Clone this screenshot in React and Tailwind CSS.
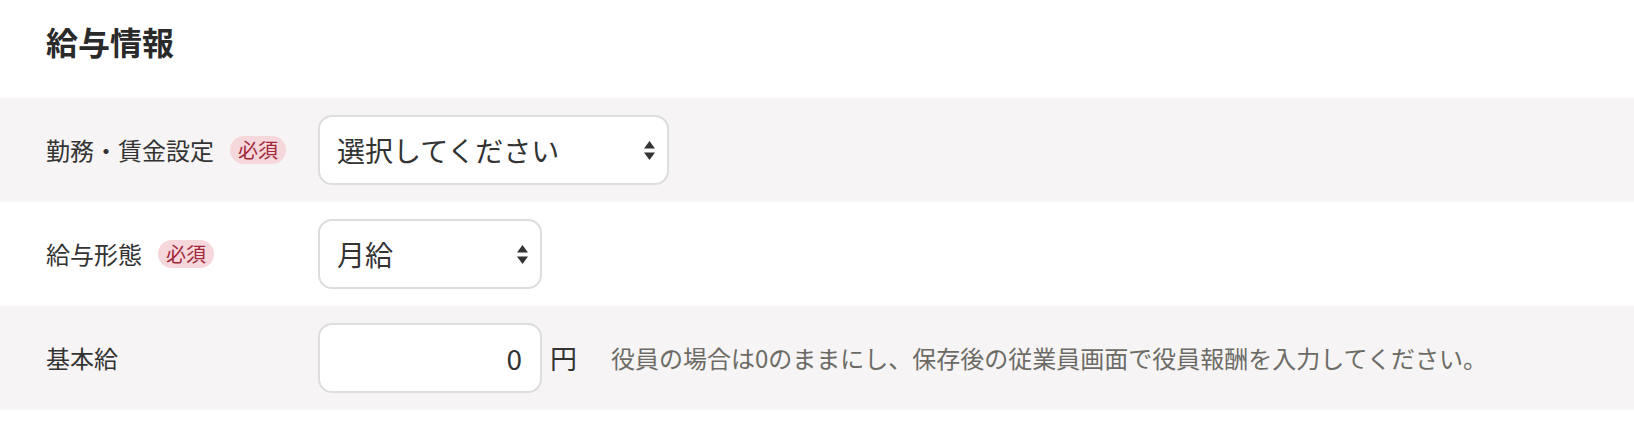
import React from 'react';

const font = { fontFamily: '"Noto Sans CJK JP", "Noto Sans", sans-serif' };

/**
 * Required badge shown next to a field label
 */
const RequiredBadge = () => (
  <span className="ml-4 inline-flex h-[28px] items-center rounded-full bg-[#f6d7db] px-[8px] text-[20px] leading-none text-[#a3283a]">
    必須
  </span>
);

/**
 * Up/down arrows drawn like a native select
 */
const SelectArrows = () => (
  <svg width="11" height="19" viewBox="0 0 11 19" className="shrink-0" aria-hidden="true">
    <path d="M5.5 0 L11 7.5 L0 7.5 Z" fill="#333" />
    <path d="M0 11.5 L11 11.5 L5.5 19 Z" fill="#333" />
  </svg>
);

const SelectBox = ({ width, options, value }) => (
  <div
    className={`flex h-[70px] items-center rounded-[14px] border-2 border-[#dedddd] bg-white pr-[12px] ${width}`}
  >
    <select
      defaultValue={value}
      className="h-full flex-1 appearance-none bg-transparent pl-[17px] text-[28px] text-[#333] outline-none"
      style={font}
    >
      {options.map(opt => (
        <option key={opt} value={opt}>{opt}</option>
      ))}
    </select>
    <SelectArrows />
  </div>
);

const FormRow = ({ label, required, shaded, children }) => (
  <div className={`flex h-[104px] items-center px-[46px] ${shaded ? 'bg-[#f6f4f4]' : 'bg-white'}`}>
    <div className="flex w-[272px] shrink-0 items-center">
      <span className="text-[24px] text-[#333]">{label}</span>
      {required && <RequiredBadge />}
    </div>
    {children}
  </div>
);

const App = () => {
  return (
    <div className="min-h-[422px] w-full bg-white" style={font}>
      {/* Section title */}
      <div className="h-[98px] px-[46px] pt-[17px]">
        <h2 className="text-[32px] font-bold leading-[48px] text-[#2a2a2a]">給与情報</h2>
      </div>

      <FormRow label="勤務・賃金設定" required shaded>
        <SelectBox width="w-[351px]" options={['選択してください']} value="選択してください" />
      </FormRow>

      <FormRow label="給与形態" required>
        <SelectBox width="w-[224px]" options={['月給', '日給', '時給']} value="月給" />
      </FormRow>

      <FormRow label="基本給" shaded>
        <input
          type="text"
          defaultValue="0"
          className="h-[70px] w-[224px] rounded-[14px] border-2 border-[#dedddd] bg-white pr-[18px] text-right text-[28px] text-[#333] outline-none"
          style={font}
        />
        <span className="ml-[8px] text-[27px] text-[#333]">円</span>
        <span className="ml-[34px] text-[24px] text-[#6c6b66]">
          役員の場合は0のままにし、保存後の従業員画面で役員報酬を入力してください。
        </span>
      </FormRow>
    </div>
  );
};

export default App;
